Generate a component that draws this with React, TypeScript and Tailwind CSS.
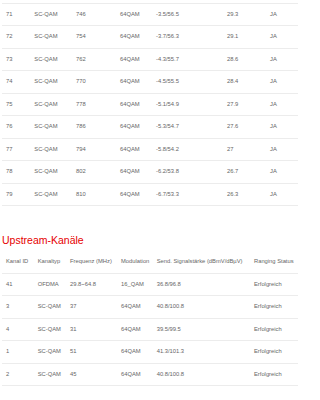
import React from "react";

const down: string[][] = [
  ["71", "SC-QAM", "746", "64QAM", "-3.5/56.5", "29.3", "JA"],
  ["72", "SC-QAM", "754", "64QAM", "-3.7/56.3", "29.1", "JA"],
  ["73", "SC-QAM", "762", "64QAM", "-4.3/55.7", "28.6", "JA"],
  ["74", "SC-QAM", "770", "64QAM", "-4.5/55.5", "28.4", "JA"],
  ["75", "SC-QAM", "778", "64QAM", "-5.1/54.9", "27.9", "JA"],
  ["76", "SC-QAM", "786", "64QAM", "-5.3/54.7", "27.6", "JA"],
  ["77", "SC-QAM", "794", "64QAM", "-5.8/54.2", "27", "JA"],
  ["78", "SC-QAM", "802", "64QAM", "-6.2/53.8", "26.7", "JA"],
  ["79", "SC-QAM", "810", "64QAM", "-6.7/53.3", "26.3", "JA"],
];

const upHead = [
  "Kanal ID",
  "Kanaltyp",
  "Frequenz (MHz)",
  "Modulation",
  "Send. Signalstärke (dBmV/dBµV)",
  "Ranging Status",
];

const up: string[][] = [
  ["41", "OFDMA", "29.8~64.8", "16_QAM", "36.8/96.8", "Erfolgreich"],
  ["3", "SC-QAM", "37", "64QAM", "40.8/100.8", "Erfolgreich"],
  ["4", "SC-QAM", "31", "64QAM", "39.5/99.5", "Erfolgreich"],
  ["1", "SC-QAM", "51", "64QAM", "41.3/101.3", "Erfolgreich"],
  ["2", "SC-QAM", "45", "64QAM", "40.8/100.8", "Erfolgreich"],
];

export default function App() {
  return (
    <div
      className="w-[320px] h-[400px] bg-white overflow-hidden pt-[2.8px]"
      style={{ fontFamily: '"Liberation Sans", Arial, sans-serif' }}
    >
      <div className="ml-[2px] w-[296px] border-t border-[#ececec]">
        {down.map((r, i) => (
          <div
            key={i}
            className="grid grid-cols-[28.3px_41.7px_44px_36px_71px_43px_1fr] items-center h-[22.5px] pl-[4px] border-b border-[#ececec] text-[5.8px] leading-none text-[#666] whitespace-nowrap"
          >
            {r.map((c, j) => (
              <div key={j}>{c}</div>
            ))}
          </div>
        ))}
      </div>

      <div className="mt-[27.6px] ml-[2px] h-[12px] text-[10.5px] leading-[12px] text-[#e60000] whitespace-nowrap">
        Upstream-Kanäle
      </div>

      <div className="mt-[5.4px] ml-[2px] w-[296px]">
        <div className="grid grid-cols-[31.7px_32.3px_51px_35.7px_97.3px_1fr] items-center h-[22.5px] pl-[4px] border-b border-[#ececec] text-[5.8px] leading-none text-[#666] whitespace-nowrap">
          {upHead.map((c, j) => (
            <div key={j}>{c}</div>
          ))}
        </div>
        {up.map((r, i) => (
          <div
            key={i}
            className="grid grid-cols-[31.7px_32.3px_51px_35.7px_97.3px_1fr] items-center h-[22.5px] pl-[4px] border-b border-[#ececec] text-[5.8px] leading-none text-[#666] whitespace-nowrap"
          >
            {r.map((c, j) => (
              <div key={j}>{c}</div>
            ))}
          </div>
        ))}
      </div>
    </div>
  );
}
